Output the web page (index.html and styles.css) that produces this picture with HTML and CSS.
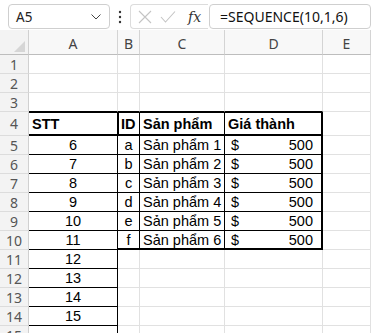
FILE: index.html
```html
<!DOCTYPE html>
<html>
<head>
<meta charset="utf-8">
<link rel="stylesheet" href="styles.css">
</head>
<body>
<div class="app">
  <div class="fbar">
    <div class="namebox">
      <span class="nb-text">A5</span>
      <svg class="chev" width="10" height="6" viewBox="0 0 10 6"><path d="M0.5 0.5 L5 5 L9.5 0.5" fill="none" stroke="#444" stroke-width="1"/></svg>
    </div>
    <svg class="dots" width="4" height="14" viewBox="0 0 4 14"><circle cx="2" cy="2" r="1.2" fill="#333"/><circle cx="2" cy="7" r="1.2" fill="#333"/><circle cx="2" cy="12" r="1.2" fill="#333"/></svg>
    <div class="fxgroup">
      <svg class="ico" width="14" height="14" viewBox="0 0 14 14"><path d="M1 1 L13 13 M13 1 L1 13" stroke="#c4c4c4" stroke-width="1.1" fill="none"/></svg>
      <svg class="ico" width="16" height="14" viewBox="0 0 16 14"><path d="M1 7 L5.5 12 L15 1.5" stroke="#c4c4c4" stroke-width="1.1" fill="none"/></svg>
      <span class="fx">fx</span>
    </div>
    <div class="formula">=SEQUENCE(10,1,6)</div>
  </div>
  <div class="mark"></div>
  <div class="sheet">
    <div class="corner"><span class="tri"></span></div>
    <div class="ch">A</div><div class="ch">B</div><div class="ch">C</div><div class="ch">D</div><div class="ch">E</div>
    <div class="rh">1</div><div class="c"></div><div class="c"></div><div class="c"></div><div class="c"></div><div class="c"></div>
    <div class="rh">2</div><div class="c"></div><div class="c"></div><div class="c"></div><div class="c"></div><div class="c"></div>
    <div class="rh">3</div><div class="c kb"></div><div class="c kb"></div><div class="c kb"></div><div class="c kb"></div><div class="c"></div>
    <div class="rh">4</div>
    <div class="c b kb kr xt xb">STT</div>
    <div class="c b kb kr xt xb xl">ID</div>
    <div class="c b kb kr xt xb">Sản phẩm</div>
    <div class="c b kb kr xt xb xr">Giá thành</div>
    <div class="c"></div>
    <div class="rh">5</div>
    <div class="c ctr kb kr">6</div><div class="c ctr kb kr">a</div><div class="c kb kr">Sản phẩm 1</div><div class="c acc kb kr xr"><span>$</span><span>500</span></div><div class="c"></div>
    <div class="rh">6</div>
    <div class="c ctr kb kr">7</div><div class="c ctr kb kr">b</div><div class="c kb kr">Sản phẩm 2</div><div class="c acc kb kr xr"><span>$</span><span>500</span></div><div class="c"></div>
    <div class="rh">7</div>
    <div class="c ctr kb kr">8</div><div class="c ctr kb kr">c</div><div class="c kb kr">Sản phẩm 3</div><div class="c acc kb kr xr"><span>$</span><span>500</span></div><div class="c"></div>
    <div class="rh">8</div>
    <div class="c ctr kb kr">9</div><div class="c ctr kb kr">d</div><div class="c kb kr">Sản phẩm 4</div><div class="c acc kb kr xr"><span>$</span><span>500</span></div><div class="c"></div>
    <div class="rh">9</div>
    <div class="c ctr kb kr">10</div><div class="c ctr kb kr">e</div><div class="c kb kr">Sản phẩm 5</div><div class="c acc kb kr xr"><span>$</span><span>500</span></div><div class="c"></div>
    <div class="rh">10</div>
    <div class="c ctr kb kr">11</div><div class="c ctr kb kr xb">f</div><div class="c kb kr xb">Sản phẩm 6</div><div class="c acc kb kr xr xb"><span>$</span><span>500</span></div><div class="c"></div>
    <div class="rh">11</div>
    <div class="c ctr kb kr">12</div><div class="c"></div><div class="c"></div><div class="c"></div><div class="c"></div>
    <div class="rh">12</div>
    <div class="c ctr kb kr">13</div><div class="c"></div><div class="c"></div><div class="c"></div><div class="c"></div>
    <div class="rh">13</div>
    <div class="c ctr kb kr">14</div><div class="c"></div><div class="c"></div><div class="c"></div><div class="c"></div>
    <div class="rh">14</div>
    <div class="c ctr kb kr">15</div><div class="c"></div><div class="c"></div><div class="c"></div><div class="c"></div>
    <div class="rh">15</div>
    <div class="c kr"></div><div class="c"></div><div class="c"></div><div class="c"></div><div class="c"></div>
  </div>
</div>
</body>
</html>
```
FILE: styles.css
```css
* { box-sizing: border-box; }
html, body { margin: 0; padding: 0; background: #fff; }
body { width: 371px; height: 333px; overflow: hidden; }
.app { position: relative; width: 371px; }

.fbar {
  height: 30px;
  display: flex;
  align-items: flex-start;
  padding-top: 4px;
  font-family: "Noto Sans", "Open Sans", sans-serif;
}
.namebox {
  margin-left: 8px;
  width: 102px;
  height: 25px;
  border: 1px solid #cfcfcf;
  border-radius: 4px;
  display: flex;
  align-items: center;
  justify-content: space-between;
  padding: 0 8px 0 7px;
  font-size: 13.5px;
  color: #222;
}
.chev { margin-top: 1px; }
.dots { margin: 6px 0 0 8px; }
.fxgroup {
  margin-left: 8px;
  width: 78px;
  height: 25px;
  border: 1px solid #dcdcdc;
  border-right: none;
  border-radius: 4px 0 0 4px;
  display: flex;
  align-items: center;
  padding-left: 7px;
  gap: 8px;
}
.fx {
  font-family: "DejaVu Serif", "Liberation Serif", serif;
  font-style: italic;
  font-size: 14px;
  color: #333;
  margin-left: 4px;
}
.formula {
  margin-left: 1px;
  width: 162px;
  height: 25px;
  border: 1px solid #cfcfcf;
  border-radius: 4px;
  padding-left: 10px;
  display: flex;
  align-items: center;
  font-size: 14px;
  color: #111;
}

.mark { position: absolute; left: 0; top: 53px; width: 2px; height: 2px; background: #444; }

.sheet {
  display: grid;
  grid-template-columns: 29px 89px 22px 85px 98px 48px;
  grid-template-rows: 25px 19px 19px 19px 24px repeat(10, 19px) 19px;
}
.corner {
  background: #f3f3f3;
  border-right: 1px solid #d0d0d0;
  border-bottom: 1px solid #bdbdbd;
  position: relative;
}
.tri {
  position: absolute;
  right: 3px;
  bottom: 2px;
  width: 0; height: 0;
  border-left: 11px solid transparent;
  border-bottom: 11px solid #d6d6d6;
}
.ch {
  background: #f8f8f8;
  border-right: 1px solid #d4d4d4;
  border-bottom: 1px solid #bdbdbd;
  display: flex;
  align-items: center;
  justify-content: center;
  font-family: "Noto Sans", "Open Sans", sans-serif;
  font-size: 14px;
  color: #444;
  padding-top: 2px;
}
.rh {
  background: #f3f3f3;
  border-right: 1px solid #d0d0d0;
  border-bottom: 1px solid #dcdcdc;
  display: flex;
  align-items: center;
  justify-content: center;
  font-family: "Noto Sans", "Open Sans", sans-serif;
  font-size: 14px;
  color: #555;
}
.c {
  border-right: 1px solid #e1e1e1;
  border-bottom: 1px solid #e1e1e1;
  display: flex;
  align-items: center;
  padding: 0 3px;
  font-family: "Liberation Sans", Arial, sans-serif;
  font-size: 14.5px;
  color: #000;
  white-space: nowrap;
  overflow: hidden;
  box-shadow:
    inset 0 var(--t, 0px) 0 #000,
    inset calc(var(--r, 0px) * -1) 0 0 #000,
    inset 0 calc(var(--b, 0px) * -1) 0 #000,
    inset var(--l, 0px) 0 0 #000;
}
.ctr { justify-content: center; }
.b { font-weight: bold; }
.kb { border-bottom-color: #000; }
.kr { border-right-color: #000; }
.xt { --t: 1px; }
.xb { --b: 1px; }
.xr { --r: 1px; }
.xl { --l: 1px; }
.acc { justify-content: space-between; padding: 0 9px 0 6px; }
```
